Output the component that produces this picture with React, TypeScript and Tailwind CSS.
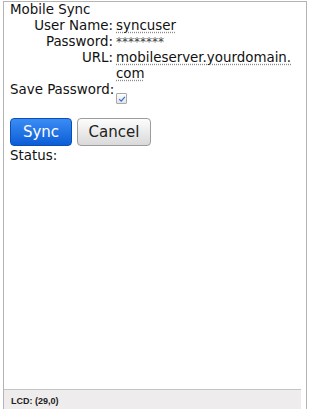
import React from "react";

const FIELDS = [
  { label: "User Name:", value: "syncuser", underline: true },
  { label: "Password:", value: "********", underline: false },
  { label: "URL:", value: "mobileserver.yourdomain.\ncom", underline: true },
];

function CheckBox() {
  return (
    <span className="flex h-[11px] w-[11px] items-center justify-center rounded-[1px] border border-[#a9a9a9] bg-gradient-to-b from-[#fdfdfd] to-[#e4e4e4]">
      <svg viewBox="0 0 10 10" className="h-[8px] w-[8px]">
        <path d="M1.5 5.2 L4 7.6 L8.6 2.4" fill="none" stroke="#2f6fd8" strokeWidth="1.5" />
      </svg>
    </span>
  );
}

export default function App() {
  return (
    <div
      className="flex h-[409px] w-[309px] flex-col bg-white pl-[3px] pt-[1px] text-[#111]"
      style={{ fontFamily: '"DejaVu Sans", sans-serif' }}
    >
      <div className="flex w-[304px] flex-1 flex-col border-l border-r border-t border-[#b4b4b4]">
        <div className="flex-1 pl-[6px] text-[13.4px] leading-[16px]">
          <div>Mobile Sync</div>

          {FIELDS.map((f) => (
            <div key={f.label} className="flex">
              <div className="w-[103px] shrink-0 text-right">{f.label}</div>
              <div className="ml-[3px] flex flex-col">
                {f.value.split("\n").map((line) => (
                  <span
                    key={line}
                    className={
                      f.underline
                        ? "underline decoration-[#8a8a8a] decoration-dotted underline-offset-2"
                        : "text-[12px] text-[#444]"
                    }
                  >
                    {line}
                  </span>
                ))}
              </div>
            </div>
          ))}

          <div className="flex">
            <div className="w-[103px] shrink-0 whitespace-nowrap">Save Password:</div>
            <div className="ml-[3px] mt-[11px]">
              <CheckBox />
            </div>
          </div>

          <div className="mt-[14px] flex gap-[5px]">
            <button className="h-[28px] w-[62px] rounded-[4px] border border-[#0b4fb6] bg-gradient-to-b from-[#3a8cf5] to-[#0b5dd6] text-[15px] text-white">
              Sync
            </button>
            <button className="h-[28px] w-[74px] rounded-[4px] border border-[#9c9c9c] bg-gradient-to-b from-[#fdfdfd] to-[#d9d9d9] text-[15px] text-[#222]">
              Cancel
            </button>
          </div>

          <div className="mt-[2px]">Status:</div>
        </div>

        <div
          className="mr-[5px] h-[20px] border-t border-[#c4c4c4] bg-[#eeecec] pl-[7px] pt-[6px] text-[9px] font-bold leading-[11px] text-[#222]"
          style={{ fontFamily: '"Liberation Sans", sans-serif' }}
        >
          LCD: (29,0)
        </div>
      </div>
    </div>
  );
}
